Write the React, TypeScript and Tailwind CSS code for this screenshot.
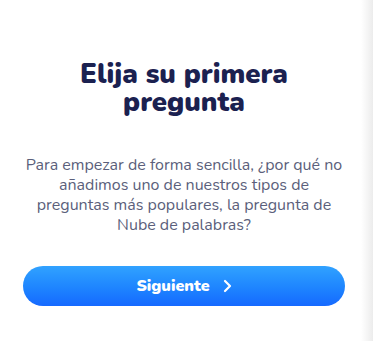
import React from "react";

export default function App() {
  return (
    <div className="relative flex h-[341px] w-[373px] overflow-hidden bg-white" style={{ fontFamily: "Nunito, Lato, 'Noto Sans', sans-serif" }}>
      <div className="flex w-[368px] flex-col items-center px-[23px] pt-[60px]">
        <h1 className="text-center text-[27.5px] font-black leading-[28px] text-[#1b2150]">
          Elija su primera
          <br />
          pregunta
        </h1>
        <p className="mt-[39px] w-[320px] text-center text-[16px] leading-[20px] text-[#5b5f7b]">
          Para empezar de forma sencilla, ¿por qué no añadimos uno de nuestros tipos de preguntas más populares, la pregunta de Nube de palabras?
        </p>
        <button className="mt-[31px] flex h-[40px] w-[322px] items-center justify-center gap-[13px] rounded-full bg-gradient-to-b from-[#31a2ff] to-[#1769ff] text-[16px] font-black text-white">
          <span>Siguiente</span>
          <svg width="9" height="14" viewBox="0 0 9 14" fill="none">
            <path d="M2 2l5 5-5 5" stroke="white" strokeWidth="2.2" strokeLinecap="round" strokeLinejoin="round" />
          </svg>
        </button>
      </div>
      <div className="absolute right-0 top-0 h-full w-[12px] bg-gradient-to-r from-white to-[#ececec]" />
    </div>
  );
}
